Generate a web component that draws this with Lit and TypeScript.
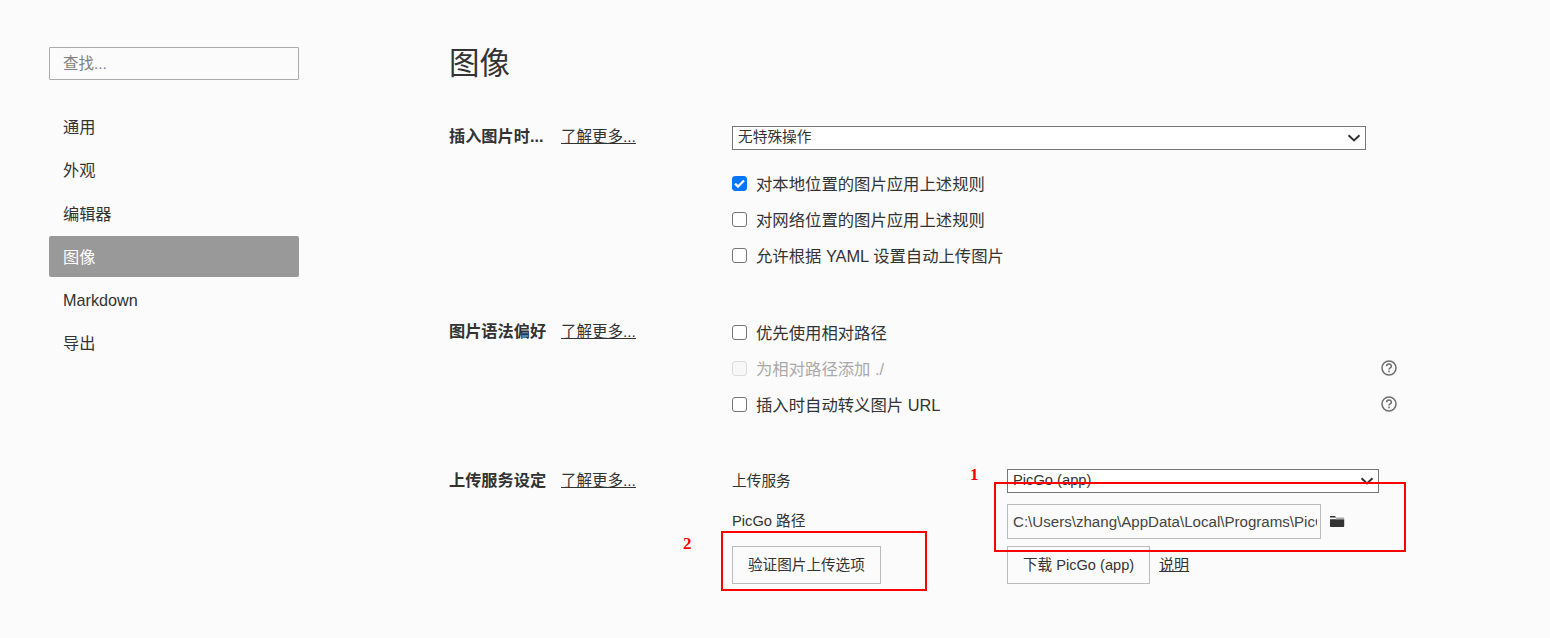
import { LitElement, html, css, svg } from "lit";
import { customElement } from "lit/decorators.js";

const chevron = svg`<svg class="chev" width="14" height="8" viewBox="0 0 14 8"><path d="M1.5 1.2 7 6.4l5.5-5.2" fill="none" stroke="#333" stroke-width="2"/></svg>`;
const help = html`<svg class="help" width="16" height="16" viewBox="0 0 16 16"><circle cx="8" cy="8" r="7" fill="none" stroke="#6e6e6e" stroke-width="1.5"/><path d="M5.6 6.3c0-3 4.8-3 4.8-.1 0 1.7-2.4 1.7-2.4 3.4" fill="none" stroke="#6e6e6e" stroke-width="1.5"/><rect x="7.2" y="10.6" width="1.6" height="1.7" fill="#6e6e6e"/></svg>`;

@customElement("app-root")
export class AppRoot extends LitElement {
  static styles = css`
    :host {
      display: block;
      position: relative;
      height: 638px;
      overflow: hidden;
      background: #fbfbfb;
      color: #333;
      font: 16.2px/20px "Liberation Sans", "Noto Sans CJK SC", sans-serif;
    }
    .page { display: flex; height: 638px; }
    .side { width: 250px; margin-left: 49px; padding-top: 47px; flex: none; }
    .search {
      box-sizing: border-box; height: 33px; border: 1px solid #aaa; border-radius: 1px;
      padding: 5px 13px 0; color: #808080; line-height: 21px; margin-bottom: 26px; font-size: 15.5px;
    }
    .nav { box-sizing: border-box; height: 41px; line-height: 42px; padding-left: 14px; margin-bottom: 2.3px; border-radius: 2px; }
    .nav.on { background: #999; color: #fff; }
    .main { margin-left: 150px; flex: 1; }
    h1 { margin: 0; padding-top: 41px; height: 44px; font-size: 30.5px; line-height: 44px; font-weight: 400; }
    .sec { display: flex; }
    .head { width: 283px; flex: none; display: flex; gap: 14px; align-items: flex-start; }
    .title { font-weight: 700; color: #333; width: 98px; white-space: nowrap; }
    a { color: #333; text-decoration: underline; font-size: 15.5px; }
    .head a { margin-top: 1px; }
    .body { flex: 1; }
    .sec1 { margin-top: 41px; }
    .select {
      box-sizing: border-box; height: 24px; border: 1px solid #767676; background: #fff;
      display: flex; align-items: center; justify-content: space-between; padding: 0 4px 0 5px; font-size: 14.7px; line-height: 20px;
    }
    .select span { margin-top: -2px; }
    .sel1 { width: 634px; margin-bottom: 16px; }
    .sel2 { width: 372px; }
    .chk {
      display: flex; align-items: center; height: 36px; gap: 9px; width: 665px; font-size: 16.35px;
    }
    .box { box-sizing: border-box; width: 15px; height: 15px; border: 1.5px solid #767676; border-radius: 3px; background: #fff; flex: none; margin-top: -2px; display: flex; align-items: center; justify-content: center; }
    .box.on { background: #0075ff; border-color: #0075ff; }
    .box.off { border-color: #dcdcdc; background: #f7f7f7; }
    .chk.dim { color: #a9a9a9; }
    .help { margin-left: auto; margin-top: -2px; }
    .sec2 { margin-top: 41px; }
    .sec2 .head { margin-top: 6px; }
    .sec3 { margin-top: 46px; }
    .sec3 .head { padding-top: 1px; }
    .grid { display: grid; grid-template-columns: 275px auto; align-items: center; justify-content: start; font-size: 14.7px; }
    .l1 { height: 24px; line-height: 24px; }
    .pathrow { display: flex; align-items: center; gap: 8px; margin-top: 11px; }
    .path { box-sizing: border-box; width: 314px; height: 35px; border: 1px solid #bbb; padding: 0 3px 0 5px; font-size: 15.1px; line-height: 33px; color: #444; }
    .clip { white-space: nowrap; overflow: hidden; }
    .lab2 { margin-top: 9px; }
    .btn { box-sizing: border-box; display: inline-block; height: 38px; line-height: 36px; border: 1px solid #bbb; padding: 0 15px; white-space: nowrap; font-size: 14.6px; }
    .btnrow { margin-top: 7px; align-items: center; display: flex; gap: 9px; }
    .btnrow a { font-size: 15px; }
    .mark { position: absolute; border: 2px solid #f00; box-sizing: border-box; }
    .m1 { left: 994px; top: 482px; width: 412px; height: 70px; }
    .m2 { left: 721px; top: 531px; width: 206px; height: 60px; }
    .num { position: absolute; color: #f00; font: bold 17px/18px "Liberation Serif", serif; }
    .n1 { left: 970px; top: 466px; }
    .n2 { left: 683px; top: 535px; }
  `;

  render() {
    const nav = ["通用", "外观", "编辑器", "图像", "Markdown", "导出"];
    const check = html`<svg width="11" height="9" viewBox="0 0 11 9"><path d="M1 4.6 4 7.6 10 1.4" fill="none" stroke="#fff" stroke-width="2.2"/></svg>`;
    return html`
      <div class="page">
        <div class="side">
          <div class="search">查找...</div>
          ${nav.map((n) => html`<div class="nav ${n === "图像" ? "on" : ""}">${n}</div>`)}
        </div>
        <div class="main">
          <h1>图像</h1>
          <div class="sec sec1">
            <div class="head"><span class="title">插入图片时...</span><a>了解更多...</a></div>
            <div class="body">
              <div class="select sel1"><span>无特殊操作</span>${chevron}</div>
              <div class="chk"><span class="box on">${check}</span>对本地位置的图片应用上述规则</div>
              <div class="chk"><span class="box"></span>对网络位置的图片应用上述规则</div>
              <div class="chk"><span class="box"></span>允许根据 YAML 设置自动上传图片</div>
            </div>
          </div>
          <div class="sec sec2">
            <div class="head"><span class="title">图片语法偏好</span><a>了解更多...</a></div>
            <div class="body">
              <div class="chk"><span class="box"></span>优先使用相对路径</div>
              <div class="chk dim"><span class="box off"></span>为相对路径添加 ./${help}</div>
              <div class="chk"><span class="box"></span>插入时自动转义图片 URL${help}</div>
            </div>
          </div>
          <div class="sec sec3">
            <div class="head"><span class="title">上传服务设定</span><a>了解更多...</a></div>
            <div class="body">
              <div class="grid">
                <div class="l1">上传服务</div>
                <div class="select sel2"><span>PicGo (app)</span>${chevron}</div>
                <div class="lab2">PicGo 路径</div>
                <div class="pathrow">
                  <div class="path"><div class="clip">C:\\Users\\zhang\\AppData\\Local\\Programs\\PicGo</div></div>
                  <svg width="16" height="13" viewBox="0 0 16 13"><path d="M1 1.5Q1 1 1.5 1H6l1.2 1.6H1zM1 4.2H15.2V11.3Q15.2 12 14.5 12H1.7Q1 12 1 11.3z" fill="#333"/><path d="M7.2 2.6H14.6Q15.2 2.6 15.2 3.2V4.2H7.2z" fill="#a8a8a8"/></svg>
                </div>
                <div class="btnrow"><span class="btn">验证图片上传选项</span></div>
                <div class="btnrow"><span class="btn">下载 PicGo (app)</span><a>说明</a></div>
              </div>
            </div>
          </div>
        </div>
      </div>
      <div class="mark m1"></div>
      <div class="mark m2"></div>
      <span class="num n1">1</span>
      <span class="num n2">2</span>
    `;
  }
}
